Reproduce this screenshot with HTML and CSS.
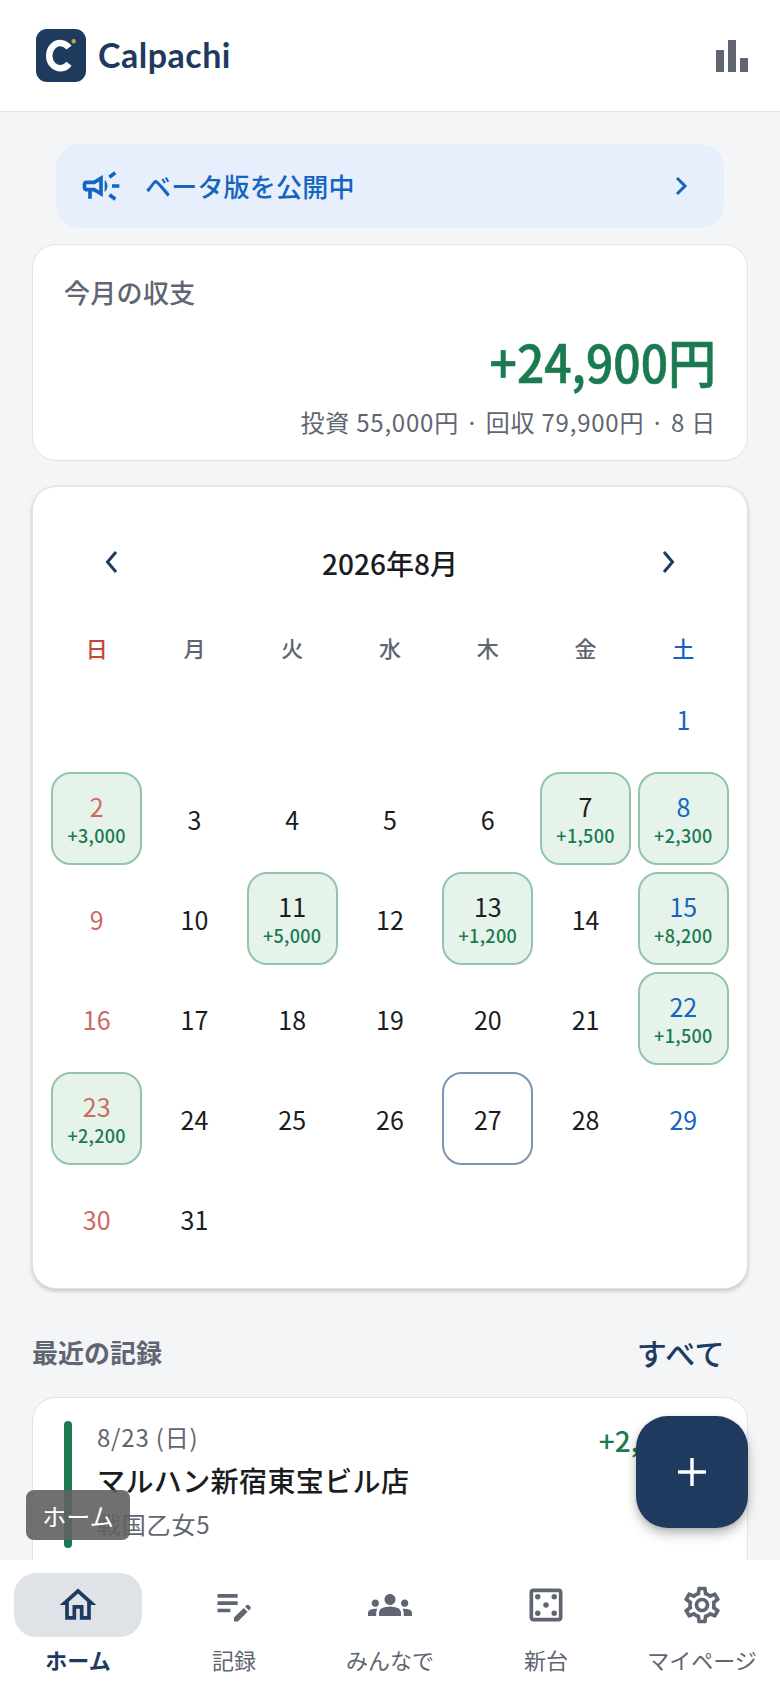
FILE: index.html
```html
<!DOCTYPE html>
<html lang="ja">
<head>
<meta charset="utf-8">
<title>Calpachi</title>
<link rel="stylesheet" href="styles.css">
</head>
<body>
<div class="app">
  <header class="topbar">
    <div class="brand">
      <svg class="logo" viewBox="0 0 50 53"><rect width="50" height="53" rx="11" fill="#1e3a5f"/><path d="M33 18.600A11.200 12.600 0 1 0 33 34.800" fill="none" stroke="#fff" stroke-width="6.500"/><circle cx="37.700" cy="12.300" r="2.200" fill="#c9a24b"/></svg>
      <span class="brand-name">Calpachi</span>
    </div>
    <svg class="stats" viewBox="0 0 32 32"><rect x="0" y="10" width="8" height="22" fill="#5f6672"/><rect x="12" y="0" width="8" height="32" fill="#5f6672"/><rect x="24" y="18" width="8" height="14" fill="#5f6672"/></svg>
  </header>

  <main class="content">
    <div class="banner">
      <svg class="banner-icon" viewBox="0 0 24 24"><path d="M18 11v2h4v-2h-4zm-2 6.61c.96.71 2.21 1.65 3.2 2.39.4-.53.8-1.07 1.2-1.6-.99-.74-2.24-1.68-3.2-2.4-.4.54-.8 1.08-1.2 1.61zM20.4 5.6c-.4-.53-.8-1.07-1.2-1.6-.99.74-2.24 1.68-3.2 2.4.4.53.8 1.07 1.2 1.6.96-.72 2.21-1.65 3.2-2.4zM4 9c-1.1 0-2 .9-2 2v2c0 1.1.9 2 2 2h1v4h2v-4h1l5 3V6L8 9H4zm5.03 1.71L11 9.53v4.94l-1.97-1.18-.48-.29H4v-2h4.55l.48-.29zM15.5 12c0-1.33-.58-2.53-1.5-3.35v6.69c.92-.81 1.5-2.01 1.5-3.34z"/></svg>
      <span class="banner-text">ベータ版を公開中</span>
      <svg class="banner-chev" viewBox="0 0 14 20"><path d="M2 2l8 8-8 8" fill="none" stroke="#1565c0" stroke-width="3"/></svg>
    </div>

    <section class="card summary">
      <div class="summary-title">今月の収支</div>
      <div class="summary-amount">+24,900円</div>
      <div class="summary-sub">投資 55,000円 · 回収 79,900円 · 8 日</div>
    </section>

    <section class="card calendar">
      <div class="cal-head">
        <svg class="cal-chev" viewBox="0 0 14 24"><path d="M11 2L2.5 12 11 22" fill="none" stroke="#1e3a5f" stroke-width="3"/></svg>
        <span class="cal-title">2026年8月</span>
        <svg class="cal-chev" viewBox="0 0 14 24"><path d="M3 2l8.500 10L3 22" fill="none" stroke="#1e3a5f" stroke-width="3"/></svg>
      </div>
      <div class="weekdays">
        <span class="sun">日</span><span>月</span><span>火</span><span>水</span><span>木</span><span>金</span><span class="sat">土</span>
      </div>
      <div class="grid">
        <div class="day"></div><div class="day"></div><div class="day"></div><div class="day"></div><div class="day"></div><div class="day"></div>
        <div class="day sat"><b>1</b></div>

        <div class="day win sun"><b>2</b><i>+3,000</i></div>
        <div class="day"><b>3</b></div>
        <div class="day"><b>4</b></div>
        <div class="day"><b>5</b></div>
        <div class="day"><b>6</b></div>
        <div class="day win"><b>7</b><i>+1,500</i></div>
        <div class="day win sat"><b>8</b><i>+2,300</i></div>

        <div class="day sun"><b>9</b></div>
        <div class="day"><b>10</b></div>
        <div class="day win"><b>11</b><i>+5,000</i></div>
        <div class="day"><b>12</b></div>
        <div class="day win"><b>13</b><i>+1,200</i></div>
        <div class="day"><b>14</b></div>
        <div class="day win sat"><b>15</b><i>+8,200</i></div>

        <div class="day sun"><b>16</b></div>
        <div class="day"><b>17</b></div>
        <div class="day"><b>18</b></div>
        <div class="day"><b>19</b></div>
        <div class="day"><b>20</b></div>
        <div class="day"><b>21</b></div>
        <div class="day win sat"><b>22</b><i>+1,500</i></div>

        <div class="day win sun"><b>23</b><i>+2,200</i></div>
        <div class="day"><b>24</b></div>
        <div class="day"><b>25</b></div>
        <div class="day"><b>26</b></div>
        <div class="day today"><b>27</b></div>
        <div class="day"><b>28</b></div>
        <div class="day sat"><b>29</b></div>

        <div class="day sun"><b>30</b></div>
        <div class="day"><b>31</b></div>
      </div>
    </section>

    <div class="section-head">
      <h2>最近の記録</h2>
      <span class="see-all">すべて</span>
    </div>

    <section class="card record">
      <div class="record-bar"></div>
      <div class="record-body">
        <div class="record-date">8/23 (日)</div>
        <div class="record-store">マルハン新宿東宝ビル店</div>
        <div class="record-machine">戦国乙女5</div>
      </div>
      <div class="record-amount">+2,200円</div>
    </section>
  </main>

  <div class="tooltip">ホーム</div>
  <button class="fab"><svg viewBox="0 0 28 28"><path d="M14 0v28M0 14h28" stroke="#fff" stroke-width="3.400"/></svg></button>

  <nav class="tabs">
    <div class="tab active">
      <span class="pill"><svg viewBox="0 0 24 24"><path d="M12 5.690l5 4.500V18h-2v-6H9v6H7v-7.810l5-4.500M12 3L2 12h3v8h6v-6h2v6h6v-8h3L12 3z"/></svg></span>
      <span class="tab-label">ホーム</span>
    </div>
    <div class="tab">
      <span class="pill"><svg viewBox="0 0 24 24"><path d="M3 10h11v2H3zM3 6h11v2H3zM3 14h7v2H3zM18.010 12.870l.7-.7c.39-.39 1.020-.39 1.410 0l.71.71c.39.39.39 1.020 0 1.410l-.7.7zM17.300 13.580l-5.300 5.300V21h2.120l5.300-5.300z"/></svg></span>
      <span class="tab-label">記録</span>
    </div>
    <div class="tab">
      <span class="pill"><svg viewBox="0 0 24 24"><path d="M12 12.750c1.630 0 3.070.39 4.240.9 1.080.48 1.760 1.560 1.760 2.730V18H6v-1.610c0-1.180.68-2.260 1.760-2.730 1.170-.52 2.610-.91 4.240-.91zM4 13c1.100 0 2-.9 2-2s-.9-2-2-2-2 .9-2 2 .9 2 2 2zm1.130 1.100c-.37-.06-.74-.1-1.130-.1-.99 0-1.930.21-2.780.58C.48 14.900 0 15.620 0 16.430V18h4.500v-1.610c0-.83.23-1.610.63-2.290zM20 13c1.100 0 2-.9 2-2s-.9-2-2-2-2 .9-2 2 .9 2 2 2zm4 3.430c0-.81-.48-1.530-1.220-1.850-.85-.37-1.790-.58-2.780-.58-.39 0-.76.04-1.130.1.4.68.63 1.460.63 2.290V18H24v-1.570zM12 6c1.660 0 3 1.340 3 3s-1.340 3-3 3-3-1.340-3-3 1.340-3 3-3z"/></svg></span>
      <span class="tab-label">みんなで</span>
    </div>
    <div class="tab">
      <span class="pill"><svg viewBox="0 0 24 24"><path d="M19 3H5c-1.100 0-2 .9-2 2v14c0 1.100.9 2 2 2h14c1.100 0 2-.9 2-2V5c0-1.100-.9-2-2-2zm0 16H5V5h14v14z"/><circle cx="7.500" cy="16.500" r="1.500"/><circle cx="7.500" cy="7.500" r="1.500"/><circle cx="12" cy="12" r="1.500"/><circle cx="16.500" cy="16.500" r="1.500"/><circle cx="16.500" cy="7.500" r="1.500"/></svg></span>
      <span class="tab-label">新台</span>
    </div>
    <div class="tab">
      <span class="pill"><svg viewBox="0 0 24 24"><path d="M19.430 12.980c.04-.32.07-.64.07-.98 0-.34-.03-.66-.07-.98l2.110-1.650c.19-.15.24-.42.12-.64l-2-3.460c-.09-.16-.26-.25-.44-.25-.06 0-.12.01-.17.03l-2.490 1c-.52-.4-1.080-.73-1.690-.98l-.38-2.650C14.460 2.180 14.250 2 14 2h-4c-.25 0-.46.18-.49.42l-.38 2.650c-.61.25-1.170.59-1.690.98l-2.490-1c-.06-.02-.12-.03-.18-.03-.17 0-.34.09-.43.25l-2 3.460c-.13.22-.07.49.12.64l2.110 1.650c-.04.32-.07.65-.07.98 0 .33.03.66.07.98l-2.110 1.650c-.19.15-.24.42-.12.64l2 3.460c.09.16.26.25.44.25.06 0 .12-.01.17-.03l2.490-1c.52.4 1.080.73 1.690.98l.38 2.650c.03.24.24.42.49.42h4c.25 0 .46-.18.49-.42l.38-2.650c.61-.25 1.170-.59 1.690-.98l2.490 1c.06.02.12.03.18.03.17 0 .34-.09.43-.25l2-3.460c.12-.22.07-.49-.12-.64l-2.110-1.650zm-1.980-1.710c.04.31.05.52.05.73 0 .21-.02.43-.05.73l-.14 1.130.89.7 1.080.84-.7 1.210-1.270-.51-1.040-.42-.9.68c-.43.32-.84.56-1.250.73l-1.060.43-.16 1.130-.2 1.350h-1.400l-.19-1.350-.16-1.130-1.060-.43c-.43-.18-.83-.41-1.230-.71l-.91-.7-1.060.43-1.270.51-.7-1.210 1.080-.84.89-.7-.14-1.130c-.03-.31-.05-.54-.05-.74s.02-.43.05-.73l.14-1.130-.89-.7-1.080-.84.7-1.210 1.270.51 1.040.42.9-.68c.43-.32.84-.56 1.250-.73l1.060-.43.16-1.130.2-1.350h1.390l.19 1.350.16 1.130 1.060.43c.43.18.83.41 1.230.71l.91.7 1.060-.43 1.270-.51.7 1.210-1.070.85-.89.7.14 1.130zM12 8c-2.210 0-4 1.790-4 4s1.790 4 4 4 4-1.790 4-4-1.790-4-4-4zm0 6c-1.100 0-2-.9-2-2s.9-2 2-2 2 .9 2 2-.9 2-2 2z"/></svg></span>
      <span class="tab-label">マイページ</span>
    </div>
  </nav>
</div>
</body>
</html>
```
FILE: styles.css
```css
* { box-sizing: border-box; }
html, body { margin: 0; padding: 0; }
body {
  font-family: "Noto Sans CJK JP", "Noto Sans", sans-serif;
  color: #1a1c1e;
  background: #f3f5f7;
}
.app {
  position: relative;
  width: 780px;
  height: 1688px;
  overflow: hidden;
  display: flex;
  flex-direction: column;
  background: #f3f5f7;
}
.topbar {
  flex: none;
  height: 112px;
  padding: 0 32px 0 36px;
  display: flex;
  align-items: center;
  justify-content: space-between;
  background: #fff;
  border-bottom: 1px solid #dfe2e6;
}
.brand { display: flex; align-items: center; gap: 12px; padding-bottom: 1px; }
.logo { width: 50px; height: 53px; display: block; }
.brand-name {
  font-family: "Lato", sans-serif;
  font-weight: 700;
  font-size: 34px;
  letter-spacing: .5px;
  line-height: 36px;
  color: #1e3a5f;
}
.stats { width: 32px; height: 32px; display: block; }

.content {
  flex: 1;
  min-height: 0;
  overflow: hidden;
  padding: 32px 32px 0 32px;
}
.banner {
  height: 84px;
  margin: 0 24px 16px;
  padding: 0 35px 0 23px;
  display: flex;
  align-items: center;
  border-radius: 24px;
  background: #e6effb;
  color: #1565c0;
}
.banner-icon { width: 44px; height: 44px; fill: #1565c0; flex: none; }
.banner-text { flex: 1; margin-left: 22px; font-size: 26px; font-weight: 500; line-height: 36px; letter-spacing: .2px; }
.banner-chev { width: 14px; height: 20px; flex: none; }

.card {
  background: #fff;
  border: 1px solid #dfe2e6;
  border-radius: 24px;
  width: 716px;
}
.summary { height: 217px; padding: 29px 31px 0; margin-bottom: 25px; }
.summary-title { font-size: 26px; line-height: 36px; font-weight: 500; color: #5f6672; letter-spacing: .3px; }
.summary-amount {
  margin-top: 18px;
  text-align: right;
  font-size: 48px;
  line-height: 64px;
  font-weight: 500;
  -webkit-text-stroke: .6px #1a7a50;
  letter-spacing: 0;
  color: #1a7a50;
  transform: scaleY(1.09);
}
.summary-sub { margin-top: 12px; text-align: right; font-size: 24px; line-height: 36px; color: #5f6672; letter-spacing: .8px; }

.calendar {
  height: 803px;
  padding: 0 18px;
  box-shadow: 0 2px 4px rgba(0,0,0,.2);
  margin-bottom: 43px;
}
.cal-head {
  height: 62px;
  margin-top: 45px;
  padding: 0 54px;
  display: flex;
  align-items: center;
  justify-content: space-between;
}
.cal-chev { width: 14px; height: 24px; margin-bottom: 2px; }
.cal-title { font-size: 28px; line-height: 36px; font-weight: 500; }
.weekdays {
  margin-top: 38px;
  display: grid;
  grid-template-columns: repeat(7, 1fr);
  column-gap: 6.500px;
  text-align: center;
  font-size: 22px;
  line-height: 30px;
  font-weight: 500;
  color: #5f6672;
}
.weekdays .sun { color: #c5483e; }
.weekdays .sat { color: #1565c0; }
.grid {
  margin-top: 10px;
  display: grid;
  grid-template-columns: repeat(7, 1fr);
  grid-auto-rows: 93px;
  gap: 7px 6.500px;
}
.day {
  display: flex;
  flex-direction: column;
  align-items: center;
  justify-content: center;
  border: 2px solid transparent;
  border-radius: 20px;
  color: #1a1c1e;
}
.day b { font-weight: 400; font-size: 25px; line-height: 32px; }
.day i { font-style: normal; font-weight: 500; font-size: 18px; line-height: 26px; color: #1a7a50; letter-spacing: .3px; }
.day.sun b { color: #cb6a60; }
.day.sat b { color: #1565c0; }
.day.win { background: #e5f3ea; border-color: #94c4ab; }
.day.today { border-color: #7a96b5; }

.section-head {
  width: 716px;
  height: 40px;
  padding-right: 23px;
  display: flex;
  align-items: center;
  justify-content: space-between;
  margin-bottom: 25px;
}
.section-head h2 { margin: 0; font-size: 26px; line-height: 36px; font-weight: 700; color: #5f6672; }
.see-all { font-size: 30px; line-height: 40px; font-weight: 500; color: #1e3a5f; letter-spacing: .5px; }

.record {
  height: 200px;
  padding: 23px 32px 0 31px;
  display: flex;
  gap: 25px;
  align-items: flex-start;
}
.record-bar { flex: none; width: 8px; height: 127px; border-radius: 4px; background: #1a7a50; }
.record-body { flex: 1; min-width: 0; }
.record-date { font-size: 24px; line-height: 32px; color: #5f6672; letter-spacing: .8px; }
.record-store { margin-top: 8px; font-size: 28px; line-height: 38px; font-weight: 500; letter-spacing: .4px; }
.record-machine { margin-top: 9px; font-size: 24px; line-height: 32px; color: #5f6672; letter-spacing: .8px; }
.record-amount { font-size: 28px; line-height: 40px; font-weight: 500; color: #1a7a50; white-space: nowrap; margin-top: -1px; }

.tooltip {
  position: absolute;
  left: 26px;
  top: 1490px;
  width: 104px;
  height: 50px;
  display: flex;
  align-items: center;
  justify-content: center;
  border-radius: 8px;
  background: rgba(97,97,97,.9);
  color: #fff;
  font-size: 24px;
}
.fab {
  position: absolute;
  left: 636px;
  top: 1416px;
  width: 112px;
  height: 112px;
  padding: 0;
  border: 0;
  border-radius: 32px;
  background: #1e3a5f;
  display: flex;
  align-items: center;
  justify-content: center;
  box-shadow: 0 6px 12px rgba(0,0,0,.25), 0 2px 4px rgba(0,0,0,.1);
}
.fab svg { width: 28px; height: 28px; display: block; }

.tabs {
  flex: none;
  height: 128px;
  display: grid;
  grid-template-columns: repeat(5, 1fr);
  background: #fff;
  position: relative;
}
.tab { display: flex; flex-direction: column; align-items: center; padding-top: 13px; }
.pill {
  width: 128px;
  height: 64px;
  border-radius: 22px;
  display: flex;
  align-items: center;
  justify-content: center;
}
.pill svg { width: 44px; height: 44px; fill: #5f6672; display: block; }
.tab-label { margin-top: 6px; font-size: 22px; line-height: 32px; color: #5f6672; }
.tab.active .pill { background: #dfe3e7; }
.tab.active .pill svg { fill: #1e3a5f; }
.tab.active .tab-label { font-weight: 700; color: #1e3a5f; }
```
